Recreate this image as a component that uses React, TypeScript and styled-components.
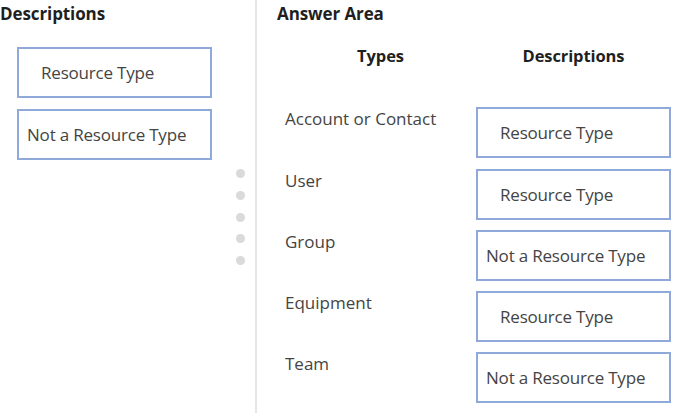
import { createGlobalStyle, styled } from "styled-components";

const GlobalStyle = createGlobalStyle`
    html, body {
        margin: 0;
        padding: 0;
        background: #ffffff;
    }
    body {
        font-family: 'Open Sans', 'Noto Sans', sans-serif;
        color: #3c3c3c;
    }
`;

const Page = styled.div`
    display: flex;
    flex-direction: row;
    width: 677px;
    height: 413px;
    overflow: hidden;
    background: #ffffff;
`;

const SourcePanel = styled.div`
    width: 229px;
    padding: 4px 0 0 0;
    box-sizing: border-box;
`;

const PanelTitle = styled.div`
    font-weight: 700;
    font-size: 17px;
    color: #1f1f1f;
    letter-spacing: -0.1px;
    line-height: 20px;
`;

const SourceList = styled.div`
    display: flex;
    flex-direction: column;
    gap: 11px;
    margin: 23px 0 0 17px;
`;

const Tile = styled.div<{ $indent: number }>`
    display: flex;
    align-items: center;
    box-sizing: border-box;
    width: 195px;
    height: 51px;
    padding-left: ${(p) => p.$indent}px;
    border: 2px solid #8ea9da;
    background: #ffffff;
    font-size: 17px;
    color: #444444;
    letter-spacing: -0.2px;
    white-space: nowrap;
`;

const Handle = styled.div`
    width: 22px;
    margin-right: 4px;
    display: flex;
    flex-direction: column;
    align-items: center;
    gap: 12.8px;
    padding-top: 169px;
    box-sizing: border-box;
`;

const Dot = styled.span`
    width: 9px;
    height: 9px;
    border-radius: 50%;
    background: #dadada;
`;

const Divider = styled.div`
    width: 2px;
    background: #e6e6e6;
`;

const AnswerPanel = styled.div`
    flex: 1;
    padding: 4px 0 0 20px;
    box-sizing: border-box;
`;

const AnswerGrid = styled.div`
    display: grid;
    grid-template-columns: 191px 195px;
    grid-auto-rows: 51px;
    row-gap: 10.25px;
    margin: 22px 0 0 8px;
`;

const ColumnHeader = styled.div`
    font-weight: 700;
    font-size: 16.5px;
    color: #1f1f1f;
    text-align: center;
    letter-spacing: -0.1px;
    margin-top: -2px;
    line-height: 24px;
`;

const GridRow = styled.div`
    display: contents;
`;

const TypeLabel = styled.div`
    font-size: 17px;
    color: #444444;
    letter-spacing: 0px;
    line-height: 22px;
    padding-top: 1px;
`;

const rows = [
    { type: "Account or Contact", answer: "Resource Type" },
    { type: "User", answer: "Resource Type" },
    { type: "Group", answer: "Not a Resource Type" },
    { type: "Equipment", answer: "Resource Type" },
    { type: "Team", answer: "Not a Resource Type" },
];

const indentFor = (label: string) => (label.startsWith("Not") ? 8 : 22);

export default function App() {
    return (
        <Page>
            <GlobalStyle />
            <SourcePanel>
                <PanelTitle>Descriptions</PanelTitle>
                <SourceList>
                    <Tile $indent={22}>Resource Type</Tile>
                    <Tile $indent={8}>Not a Resource Type</Tile>
                </SourceList>
            </SourcePanel>
            <Handle>
                {[0, 1, 2, 3, 4].map((i) => (
                    <Dot key={i} />
                ))}
            </Handle>
            <Divider />
            <AnswerPanel>
                <PanelTitle>Answer Area</PanelTitle>
                <AnswerGrid>
                    <GridRow>
                        <ColumnHeader>Types</ColumnHeader>
                        <ColumnHeader>Descriptions</ColumnHeader>
                    </GridRow>
                    {rows.map((r) => (
                        <GridRow key={r.type}>
                            <TypeLabel>{r.type}</TypeLabel>
                            <Tile $indent={indentFor(r.answer)}>{r.answer}</Tile>
                        </GridRow>
                    ))}
                </AnswerGrid>
            </AnswerPanel>
        </Page>
    );
}
